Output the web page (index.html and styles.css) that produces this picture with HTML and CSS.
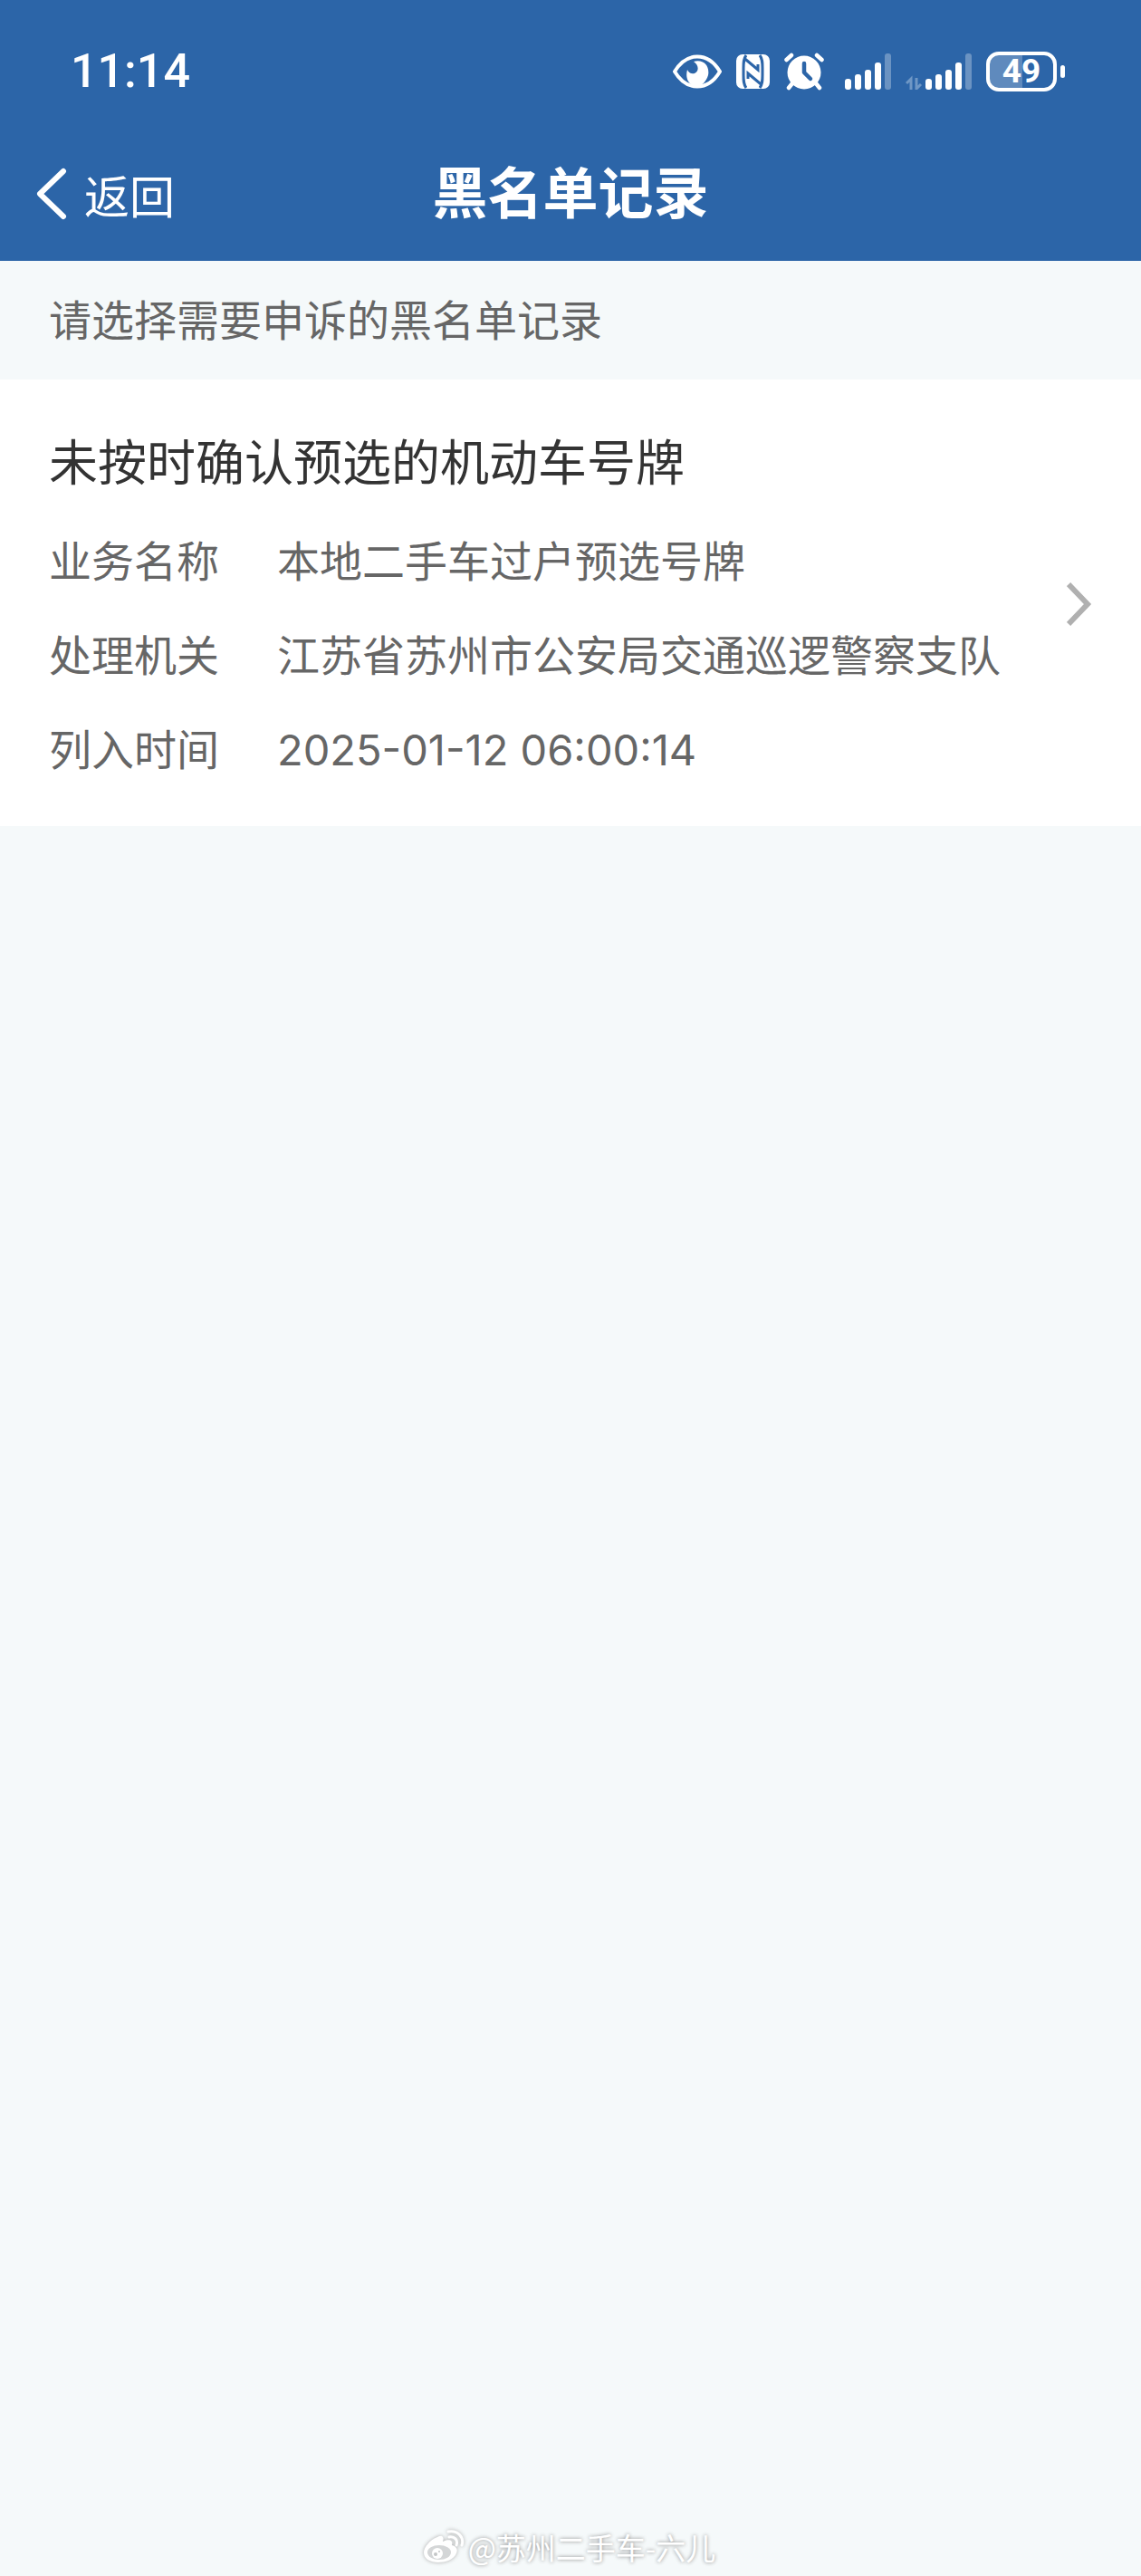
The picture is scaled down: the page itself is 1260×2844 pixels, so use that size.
FILE: index.html
```html
<!DOCTYPE html>
<html lang="zh-CN">
<head>
    <meta charset="UTF-8">
    <meta name="viewport" content="width=device-width, initial-scale=1">
    <title>黑名单记录</title>
    <link rel="stylesheet" href="styles.css">
</head>
<body>
    <header class="header">
        <div class="status-bar">
            <span class="time">11:14</span>
            <div class="status-icons">
                <svg class="icon-eye" width="54" height="38" viewBox="0 0 54 38">
                    <path d="M2 19C8 9 17 2.500 27 2.500S46 9 52 19C46 29 37 35.500 27 35.500S8 29 2 19Z" fill="none" stroke="#fff" stroke-width="4" stroke-linejoin="round"/>
                    <path d="M23 8C34 5 41 13 39 23C37 30 32 35 27 35C19 35 13 28 16 17C18 21 21 22 24 21C29 19 29 12 23 8Z" fill="#fff"/>
                </svg>
                <svg class="icon-nfc" width="38" height="38" viewBox="0 0 38 38">
                    <rect width="37" height="38" rx="7" fill="#fff"/>
                    <path d="M11 1C8 5 8 9 8 15V23C8 29 8 33 11 37M8.500 4L24 17V11M26 1C29 5 29 9 29 15V23C29 29 29 33 26 37M28.500 34L13 21V27" fill="none" stroke="#2c65a8" stroke-width="3"/>
                </svg>
                <svg class="icon-alarm" width="44" height="42" viewBox="0 0 44 42">
                    <path d="M2.500 8L8 3M41.500 8L36 3M9 34L5 39M35 34L39 39" stroke="#fff" stroke-width="4.500" stroke-linecap="round"/>
                    <circle cx="22" cy="22" r="18.500" fill="#fff"/>
                    <path d="M22 12V22L29 29" fill="none" stroke="#2c65a8" stroke-width="4.500" stroke-linecap="round" stroke-linejoin="round"/>
                </svg>
                <svg class="icon-signal" width="51" height="40" viewBox="0 0 51 40">
                    <g fill="#fff">
                        <rect x="0" y="28" width="7" height="12" rx="3"/>
                        <rect x="11" y="23" width="7" height="17" rx="3"/>
                        <rect x="22" y="18" width="7" height="22" rx="3"/>
                        <rect x="33" y="10" width="7" height="30" rx="3"/>
                        <rect x="44" y="0" width="7" height="40" rx="3" opacity=".3"/>
                    </g>
                </svg>
                <svg class="icon-signal" width="73" height="40" viewBox="0 0 73 40">
                    <path d="M1 33L6 28V40M12 27V39L17 34" fill="none" stroke="#6f97c5" stroke-width="3"/>
                    <g fill="#fff">
                        <rect x="22" y="28" width="7" height="12" rx="3"/>
                        <rect x="33" y="23" width="7" height="17" rx="3"/>
                        <rect x="44" y="18" width="7" height="22" rx="3"/>
                        <rect x="55" y="10" width="7" height="30" rx="3"/>
                        <rect x="66" y="0" width="7" height="40" rx="3" opacity=".3"/>
                    </g>
                </svg>
                <div class="battery"><span class="battery-level">49</span></div>
            </div>
        </div>
        <nav class="nav">
            <button class="back" type="button">
                <svg width="34" height="58" viewBox="0 0 34 58">
                    <path d="M30 4L4 29L30 54" fill="none" stroke="#fff" stroke-width="6" stroke-linecap="round" stroke-linejoin="round"/>
                </svg>
                返回
            </button>
            <h1 class="title">黑名单记录</h1>
        </nav>
    </header>

    <main>
        <p class="tip">请选择需要申诉的黑名单记录</p>
        <a class="record" href="#">
            <div class="record-body">
                <h2 class="record-title">未按时确认预选的机动车号牌</h2>
                <dl class="record-info">
                    <dt>业务名称</dt>
                    <dd>本地二手车过户预选号牌</dd>
                    <dt>处理机关</dt>
                    <dd>江苏省苏州市公安局交通巡逻警察支队</dd>
                    <dt>列入时间</dt>
                    <dd>2025-01-12 06:00:14</dd>
                </dl>
            </div>
            <svg class="arrow" width="28" height="50" viewBox="0 0 28 50">
                <path d="M2 3L23 25L2 47" fill="none" stroke="#b0b0b0" stroke-width="6"/>
            </svg>
        </a>
    </main>

    <footer class="watermark">
        <svg class="weibo" width="46" height="38" viewBox="0 0 46 38">
            <path d="M16 8C21 5 24 8 22 13C28 10 34 11 32 17C37 18 39 22 37 26C34 33 25 36 17 36C8 36 1 32 1 25C1 19 8 11 16 8Z" fill="#fff"/>
            <path d="M29 8C35 7 39 11 37 17M28 2C38 0 46 8 43 17" fill="none" stroke="#fff" stroke-width="3" stroke-linecap="round"/>
            <ellipse cx="18" cy="25" rx="13" ry="8" fill="#d4d6d7"/>
            <circle cx="16" cy="26" r="6" fill="#fff"/>
            <circle cx="14" cy="27" r="2" fill="#c4c6c7"/>
            <circle cx="18" cy="24" r="1" fill="#c4c6c7"/>
        </svg>
        <span>@苏州二手车-六儿</span>
    </footer>
</body>
</html>
```
FILE: styles.css
```css
* {
    box-sizing: border-box;
}
body {
    margin: 0;
    min-height: 100vh;
    display: flex;
    flex-direction: column;
    background-color: #f5f9fa;
    color: #666;
    font-family: Inter, "Noto Sans CJK SC", sans-serif;
    font-size: 47px;
    line-height: 64px;
}
h1, h2, p, dl, dd {
    margin: 0;
    font-weight: normal;
}

/* header */
.header {
    background-color: #2c65a8;
    color: #fff;
}
.status-bar {
    display: flex;
    align-items: center;
    justify-content: space-between;
    height: 158px;
    padding: 0 84px 0 78px;
}
.time {
    font-family: Roboto, sans-serif;
    font-size: 52px;
    font-weight: 500;
}
.status-icons {
    display: flex;
    align-items: center;
}
.icon-nfc {
    margin-left: 16px;
}
.icon-alarm {
    margin-left: 15px;
}
.icon-signal {
    margin-left: 23px;
}
.icon-signal + .icon-signal {
    margin-left: 16px;
}
.battery {
    position: relative;
    width: 78px;
    height: 44px;
    margin-left: 16px;
    margin-right: 9px;
    border: 4px solid #fff;
    border-radius: 14px;
    background: linear-gradient(to right, #5f8abd 51%, transparent 51%);
}
.battery::after {
    content: "";
    position: absolute;
    top: 11px;
    right: -13px;
    width: 5px;
    height: 14px;
    border-radius: 3px;
    background-color: #fff;
}
.battery-level {
    display: block;
    font-family: Roboto, sans-serif;
    font-size: 37px;
    font-weight: bold;
    line-height: 36px;
    text-align: center;
}
.nav {
    display: grid;
    grid-template-columns: 1fr auto 1fr;
    align-items: center;
    height: 130px;
    padding: 0 40px 18px;
}
.back {
    display: flex;
    align-items: center;
    gap: 19px;
    justify-self: start;
    padding: 0;
    border: none;
    background: none;
    color: inherit;
    font-family: "Noto Sans CJK SC", sans-serif;
    font-size: 50px;
    line-height: 64px;
    cursor: pointer;
}
.title {
    font-size: 61px;
    font-weight: bold;
}

/* list */
.tip {
    padding: 34px 54px 33px;
}
.record {
    display: flex;
    align-items: center;
    justify-content: space-between;
    padding: 55px 54px 52px;
    background-color: #fff;
    color: inherit;
    text-decoration: none;
}
.record-title {
    margin-bottom: 38px;
    color: #333;
    font-size: 54px;
    line-height: 76px;
}
.record-info {
    display: grid;
    grid-template-columns: auto 1fr;
    gap: 40px 64px;
}
.arrow {
    flex: none;
}

/* watermark */
.watermark {
    display: flex;
    align-items: center;
    justify-content: center;
    gap: 4px;
    margin-top: auto;
    padding: 0 3px 8px 0;
    color: #fff;
    font-family: "Noto Sans CJK SC", sans-serif;
    font-size: 33px;
    line-height: 48px;
    text-shadow: 0 0 4px #888;
}
.weibo {
    filter: drop-shadow(0 0 2px #aaa);
}
```
